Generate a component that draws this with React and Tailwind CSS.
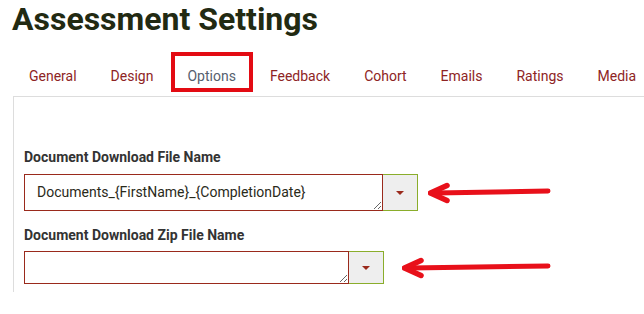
import React from "react"

const tabs = ["General", "Design", "Options", "Feedback", "Cohort", "Emails", "Ratings", "Media"]

function Arrow({ width }) {
  return (
    <svg width={width} height="22" viewBox={`0 0 ${width} 22`} className="shrink-0">
      <line x1="8" y1="11" x2={width - 4} y2="9" stroke="#e8101a" strokeWidth="5" strokeLinecap="round" />
      <path d="M2.5 11 L19 3.5 M2.5 11 L19 18.5" stroke="#e8101a" strokeWidth="5.5" strokeLinecap="round" fill="none" />
    </svg>
  )
}

function FieldRow({ label, value, width, height, labelGap, arrowGap, arrowWidth }) {
  return (
    <div>
      <div className="text-[14px] font-bold leading-[16px] text-[#333]" style={{ marginBottom: labelGap }}>
        {label}
      </div>
      <div className="flex items-center">
        <textarea
          readOnly
          value={value}
          className="block resize-y border border-[#9a2a1c] bg-white px-[12px] py-[7px] text-[14px] leading-[20px] text-[#2a2a1a] outline-none overflow-hidden"
          style={{ width, height }}
        />
        <div
          className="flex items-center justify-center border border-l-0 border-[#8aad2b] bg-[#eeeeee] w-[35px]"
          style={{ height }}>
          <div className="w-0 h-0 border-l-[4px] border-r-[4px] border-t-[4px] border-l-transparent border-r-transparent border-t-[#9a2a1c]" />
        </div>
        <div style={{ marginLeft: arrowGap }}>
          <Arrow width={arrowWidth} />
        </div>
      </div>
    </div>
  )
}

export default function App() {
  return (
    <div className="w-[644px] h-[314px] bg-white overflow-hidden" style={{ fontFamily: "Roboto, 'Liberation Sans', sans-serif" }}>
      <h1 className="ml-[12px] mt-[1px] text-[32px] leading-[37px] font-bold text-[#222a12]">
        Assessment Settings
      </h1>

      <div className="relative ml-[12px] mt-[18px] flex h-[40px]">
        {tabs.map((t) => (
          <div
            key={t}
            className={
              "flex items-center px-[17px] text-[14px] " +
              (t === "Options" ? "text-[#55606e]" : "text-[#8e2424]")
            }>
            {t}
          </div>
        ))}
        {/* highlight box */}
        <div className="absolute left-[159px] top-[-4px] w-[82px] h-[40px] border-[4px] border-[#e30b13]" />
      </div>

      <div className="ml-[13px] h-[196px] border-l border-t border-[#dddddd] pl-[10px] pt-[52px]">
        <FieldRow
          label="Document Download File Name"
          value="Documents_{FirstName}_{CompletionDate}"
          width={359}
          height={37}
          labelGap={9}
          arrowGap={10}
          arrowWidth={124}
        />
        <div className="mt-[16px]">
          <FieldRow
            label="Document Download Zip File Name"
            value=""
            width={325}
            height={33}
            labelGap={8}
            arrowGap={18}
            arrowWidth={150}
          />
        </div>
      </div>
    </div>
  )
}
